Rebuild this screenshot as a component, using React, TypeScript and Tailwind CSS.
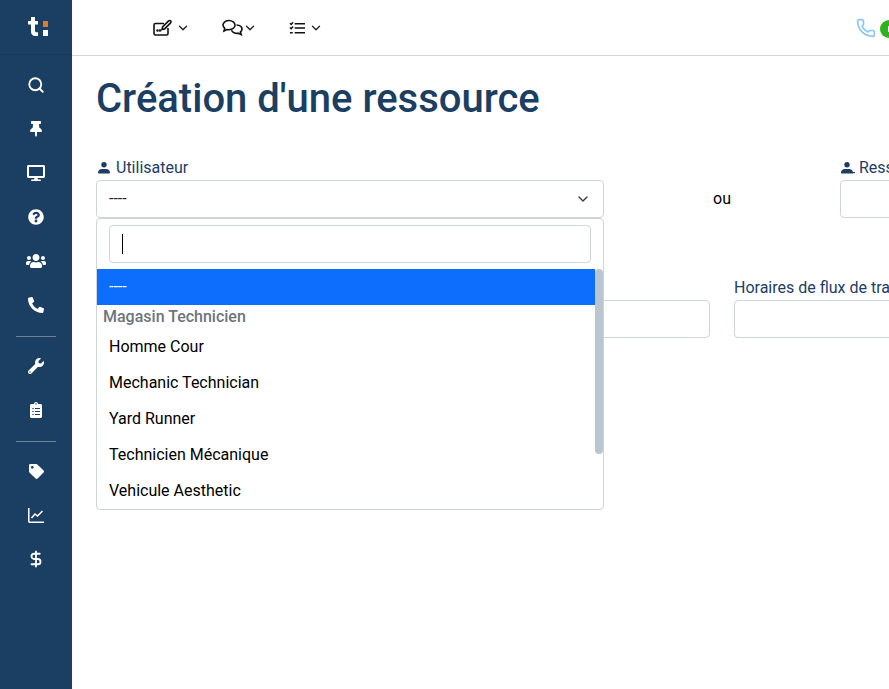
import React from "react";
import { FaThumbtack, FaDesktop, FaQuestionCircle, FaUsers, FaPhoneAlt, FaWrench, FaClipboardList, FaTag } from "react-icons/fa";
import { ChevronDown, Phone, Search, DollarSign } from "lucide-react";

const SideItem = ({ children }: { children: React.ReactNode }) => (
  <div className="h-[44px] flex items-center justify-center text-white text-[16px]">{children}</div>
);

const Divider = () => <div className="mx-4 h-px bg-[#6b8299]" />;

const UserIcon = ({ plus }: { plus?: boolean }) => (
  <svg width="14" height="12" viewBox="0 0 14 12" fill="#1b3e63" className="mr-[4px] shrink-0 -ml-[1px]">
    <circle cx="6" cy="2.800" r="2.700" />
    <path d="M1 11.500c-.6 0-1-.4-1-1C.2 8.500 1.800 7 3.800 7h4.400c2 0 3.600 1.500 3.800 3.500 0 .6-.4 1-1 1z" />
    {plus && <path d="M11 10h3v1.200h-3z" />}
  </svg>
);

const Chevron = () => <ChevronDown className="w-[14px] h-[14px] text-[#212529]" strokeWidth={2.4} />;

const options = ["Homme Cour", "Mechanic Technician", "Yard Runner", "Technicien Mécanique", "Vehicule Aesthetic"];

export default function App() {
  return (
    <div className="w-[889px] h-[689px] overflow-hidden flex bg-white font-['Roboto',sans-serif] text-[16px]">
      <aside className="w-[72px] shrink-0 h-full bg-[#1b3e63] flex flex-col">
        <div className="h-[55px] border-b border-[#17365a] flex items-center justify-center">
          <svg width="20" height="19" viewBox="0 0 20 19" className="ml-[4px] mb-[1px]">
            <path d="M3 0h4v4h3v3.500H7v6c0 1.300.6 1.800 1.800 1.800H10V19H7.500C4.500 19 3 17.300 3 14.500v-7H0V4h3z" fill="#fff" />
            <rect x="15" y="4" width="5" height="6" fill="#e07b2e" />
            <rect x="15" y="13" width="5" height="6" fill="#fff" />
          </svg>
        </div>
        <div className="pt-[8px] flex flex-col pb-[9px]">
          <SideItem><Search className="w-[18px] h-[18px]" strokeWidth={2.4} /></SideItem>
          <SideItem><FaThumbtack className="text-[16px]" /></SideItem>
          <SideItem><FaDesktop className="text-[18px]" /></SideItem>
          <SideItem><FaQuestionCircle /></SideItem>
          <SideItem><FaUsers className="text-[20px]" /></SideItem>
          <SideItem><FaPhoneAlt /></SideItem>
        </div>
        <Divider />
        <div className="pt-[7px] pb-[9px] flex flex-col">
          <SideItem><FaWrench /></SideItem>
          <SideItem><FaClipboardList /></SideItem>
        </div>
        <Divider />
        <div className="pt-[7px] pb-[8px] flex flex-col">
          <SideItem><FaTag className="text-[15px]" /></SideItem>
          <SideItem>
            <svg width="16" height="15" viewBox="0 0 16 15" fill="none" stroke="#fff" strokeWidth="1.500">
              <path d="M.8 0v13.200a1 1 0 0 0 1 1H16" />
              <path d="M3.500 10l3.500-4 2.500 2 5-5" />
            </svg>
          </SideItem>
          <SideItem><DollarSign className="w-[18px] h-[18px]" strokeWidth={2.4} /></SideItem>
        </div>
      </aside>

      <div className="flex-1 min-w-0 flex flex-col">
        <header className="h-[56px] shrink-0 border-b border-[#d5d5d5] flex items-center relative">
          <div className="flex items-center ml-[81px]">
            <svg width="20" height="18" viewBox="0 0 20 18" fill="none" stroke="#111" strokeWidth="1.600">
              <path d="M11 4.500H2.500A1.500 1.500 0 0 0 1 6v8.500A1.500 1.500 0 0 0 2.500 16h11a1.500 1.500 0 0 0 1.500-1.500V9" />
              <path d="M9 10.500l.6-2.600 6-6a1.300 1.300 0 0 1 2 2l-6 6z" />
              <circle cx="4.500" cy="11.500" r=".5" fill="#111" />
              <circle cx="7" cy="11.500" r=".5" fill="#111" />
            </svg>
            <span className="ml-[3px]"><Chevron /></span>
          </div>
          <div className="flex items-center ml-[32px]">
            <svg width="22" height="18" viewBox="0 0 22 18" fill="none" stroke="#111" strokeWidth="1.600">
              <path d="M7 1.500c-3.300 0-6 1.900-6 4.500 0 1.300.7 2.400 1.700 3.200L2 12l3-1.500c.6.2 1.300.3 2 .3 3.300 0 6-2 6-4.600S10.300 1.500 7 1.500z" />
              <path d="M14.500 6c3 .2 5.500 1.800 5.500 4 0 1.200-.6 2.200-1.500 2.900l.7 2.600-2.900-1.300c-2.800.6-6-.7-6.800-3" />
            </svg>
            <span className="-ml-[1px]"><Chevron /></span>
          </div>
          <div className="flex items-center ml-[32px]">
            <svg width="16" height="14" viewBox="0 0 17 14" fill="none" stroke="#111" strokeWidth="1.600">
              <path d="M1 2l1.300 1.300L4.300 1M1 6.500l1.300 1.300 2-2.300" />
              <path d="M6 2.500h11M6 7h11M6 12h11M1 12h3" />
            </svg>
            <span className="ml-[4px]"><Chevron /></span>
          </div>
          <div className="absolute left-[784px] top-[17px] flex items-center">
            <Phone className="w-[20px] h-[20px] text-[#8ac6f7]" strokeWidth={2} />
            <span className="ml-[4px] mt-[3px] w-[18px] h-[18px] rounded-full bg-[#2fb31c] shrink-0 flex items-center justify-center">
              <span className="w-[2px] h-[6px] bg-white" />
            </span>
          </div>
        </header>

        <main className="relative flex-1 pl-[24px] w-[1300px]">
          <h1 className="mt-[16px] text-[40px] leading-[54px] font-medium text-[#1b3e63] h-[54px]">Création d'une ressource</h1>

          <div className="mt-[30px] flex items-start w-[1252px]">
            <div className="w-[508px] shrink-0 relative">
              <label className="flex items-center h-[24px] text-[#1b3e63] leading-[24px] pl-[3px]"><UserIcon />Utilisateur</label>
              <div className="h-[38px] border border-[#ced4da] rounded-[4px] flex items-center justify-between pl-[12px] pr-[12px] text-[#212529]">
                <span>----</span>
                <ChevronDown className="w-[16px] h-[16px] text-[#343a40]" strokeWidth={2} />
              </div>
              <div className="absolute z-10 left-0 right-0 top-[62px] h-[292px] bg-white border border-[#ced4da] rounded-[4px] overflow-hidden">
                <div className="pt-[6px] px-[12px] pb-[6px]">
                  <div className="h-[38px] border border-[#ced4da] rounded-[4px] flex items-center pl-[12px]">
                    <span className="w-px h-[20px] bg-black" />
                  </div>
                </div>
                <div className="pr-[8px]">
                  <div className="h-[36px] bg-[#0d6efd] text-white flex items-center pl-[12px]">----</div>
                  <div className="h-[24px] pl-[6px] flex items-center font-medium text-[#6c757d]">Magasin Technicien</div>
                  {options.map((o) => (
                    <div key={o} className="h-[36px] pl-[12px] flex items-center text-black">{o}</div>
                  ))}
                </div>
                <div className="absolute top-[50px] right-0 w-[8px] h-[185px] bg-[#b9c6d0] rounded-[4px]" />
              </div>
            </div>
            <div className="w-[236px] shrink-0 h-[62px] flex items-end justify-center pb-[7px] text-black">ou</div>
            <div className="w-[508px] shrink-0">
              <label className="flex items-center h-[24px] text-[#1b3e63] leading-[24px] pl-[2px]"><UserIcon plus />Ressource</label>
              <div className="h-[38px] border border-[#ced4da] rounded-[4px]" />
            </div>
          </div>

          <div className="mt-[58px] flex gap-[24px] w-[1252px]">
            <div className="w-[614px] shrink-0">
              <div className="h-[24px]" />
              <div className="h-[38px] border border-[#ced4da] rounded-[4px]" />
            </div>
            <div className="w-[614px] shrink-0">
              <label className="block h-[24px] leading-[24px] text-[#1b3e63]">Horaires de flux de travail</label>
              <div className="h-[38px] border border-[#ced4da] rounded-[4px]" />
            </div>
          </div>
        </main>
      </div>
    </div>
  );
}
